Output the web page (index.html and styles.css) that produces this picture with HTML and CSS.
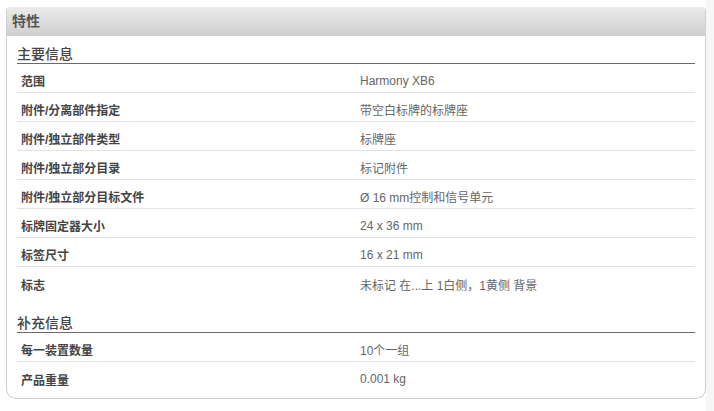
FILE: index.html
```html
<!DOCTYPE html>
<html lang="zh">
<head>
<meta charset="utf-8">
<link rel="stylesheet" href="styles.css">
</head>
<body>
<div class="page">
  <div class="panel">
    <div class="panel-head">特性</div>
    <div class="panel-body">
      <div class="section-title">主要信息</div>
      <div class="row"><div class="label">范围</div><div class="value">Harmony XB6</div></div>
      <div class="row"><div class="label">附件/分离部件指定</div><div class="value">带空白标牌的标牌座</div></div>
      <div class="row"><div class="label">附件/独立部件类型</div><div class="value">标牌座</div></div>
      <div class="row"><div class="label">附件/独立部分目录</div><div class="value">标记附件</div></div>
      <div class="row"><div class="label">附件/独立部分目标文件</div><div class="value">Ø 16 mm控制和信号单元</div></div>
      <div class="row"><div class="label">标牌固定器大小</div><div class="value">24 x 36 mm</div></div>
      <div class="row"><div class="label">标签尺寸</div><div class="value">16 x 21 mm</div></div>
      <div class="row last"><div class="label">标志</div><div class="value">未标记 在...上 1白侧，1黄侧 背景</div></div>
      <div class="section-title second">补充信息</div>
      <div class="row"><div class="label">每一装置数量</div><div class="value">10个一组</div></div>
      <div class="row last"><div class="label">产品重量</div><div class="value">0.001 kg</div></div>
    </div>
  </div>
</div>
<div class="side"></div>
</body>
</html>
```

FILE: styles.css
```css
html, body {
  margin: 0;
  height: 100%;
}
body {
  display: flex;
  background: #ffffff;
  font-family: "Liberation Sans", "Noto Sans CJK SC", sans-serif;
}
.page {
  width: 700px;
  padding: 7px 0 0 6px;
  background: #ffffff;
}
.side {
  flex: 1;
  background: #f6f6f6;
}
.panel {
  width: 700px;
  box-sizing: border-box;
  border: 1px solid #cfcfcf;
  border-top: none;
  border-radius: 4px 4px 10px 10px;
  overflow: hidden;
}
.panel-head {
  height: 29px;
  line-height: 29px;
  padding-left: 5px;
  font-size: 14px;
  font-weight: bold;
  color: #555555;
  background: linear-gradient(#ebebeb, #cfcfcf);
}
.panel-body {
  padding: 0 10px 7px 10px;
}
.section-title {
  padding-top: 10px;
  line-height: 16px;
  padding-bottom: 1px;
  font-size: 14px;
  font-weight: 500;
  color: #444444;
  border-bottom: 1px solid #6a6a6a;
}
.section-title.second {
  margin-top: 9px;
}
.row {
  display: grid;
  grid-template-columns: 1fr 1fr;
  height: 29px;
  box-sizing: border-box;
  padding-top: 5px;
  border-bottom: 1px solid #e2e2e2;
  align-items: center;
  font-size: 12px;
}
.row.last {
  border-bottom: none;
}
.label {
  padding-left: 4px;
  font-weight: bold;
  color: #444444;
}
.value {
  padding-left: 4px;
  color: #666666;
}
```
